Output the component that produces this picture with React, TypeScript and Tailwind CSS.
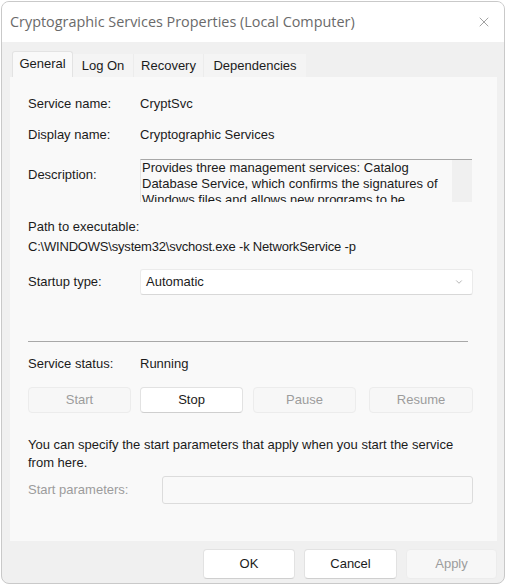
import { X, ChevronDown } from 'lucide-react'

const body = { fontFamily: '"Liberation Sans", Arial, sans-serif' }

function Btn({ label, disabled, w }: { label: string; disabled?: boolean; w: string }) {
  return (
    <div
      className={
        'flex items-center justify-center rounded-[4px] border text-[13px] ' +
        w +
        (disabled
          ? ' bg-[#f7f7f7] border-[#ececec] text-[#9c9c9c]'
          : ' bg-white border-[#e2e2e2] border-b-[#cfcfcf] text-[#1b1b1b]')
      }
    >
      {label}
    </div>
  )
}

export default function App() {
  return (
    <div className="w-[506px] h-[585px] bg-white p-[1px]" style={body}>
      <div className="flex flex-col h-[583px] rounded-lg border border-[#c9c9c9] bg-[#f0f0f0] overflow-hidden">
        {/* title bar */}
        <div className="flex items-center justify-between h-[40px] bg-white pl-[8px] pr-[12px] shrink-0">
          <span
            className="text-[14.4px] text-[#6a6a6a]"
            style={{ fontFamily: '"Open Sans", "Noto Sans", sans-serif' }}
          >
            Cryptographic Services Properties (Local Computer)
          </span>
          <X className="w-[16px] h-[16px] text-[#8a8a8a]" strokeWidth={1.2} />
        </div>

        {/* tabs */}
        <div className="flex items-end h-[35px] pl-[10px] text-[13px] text-[#1b1b1b] shrink-0">
          <div className="flex items-center justify-center w-[61px] h-[26px] pb-[2px] bg-[#f9f9f9] border border-b-0 border-[#e3e3e3] rounded-t-[3px]">
            General
          </div>
          <div className="flex items-center justify-center w-[60px] h-[23px] bg-[#f4f4f4]">Log On</div>
          <div className="flex items-center justify-center w-[70px] h-[23px] bg-[#f4f4f4] border-l border-[#ececec]">Recovery</div>
          <div className="flex items-center justify-center w-[103px] h-[23px] bg-[#f4f4f4] border-l border-[#ececec]">Dependencies</div>
        </div>

        {/* panel */}
        <div className="flex flex-col ml-[8px] w-[487px] h-[464px] bg-[#f9f9f9] pl-[18px] text-[13px] text-[#1b1b1b] shrink-0">
          <div className="flex items-center h-[20px] mt-[17px]">
            <span className="w-[112px]">Service name:</span>
            <span>CryptSvc</span>
          </div>
          <div className="flex items-center h-[20px] mt-[11px]">
            <span className="w-[112px]">Display name:</span>
            <span>Cryptographic Services</span>
          </div>
          <div className="flex mt-[14px] h-[43px]">
            <span className="w-[112px] pt-[6px]">Description:</span>
            <div className="flex w-[332px] h-[43px] border-t border-l border-[#a8a8a8] border-l-[#e4e4e4] overflow-hidden">
              <div className="flex-1 pl-[1px] leading-[16px] text-[#1b1b1b] overflow-hidden">
                Provides three management services: Catalog Database Service, which confirms the signatures of
                Windows files and allows new programs to be installed.
              </div>
              <div className="w-[20px] bg-[#f0f0f0]" />
            </div>
          </div>
          <div className="flex items-center h-[20px] mt-[15px]">Path to executable:</div>
          <div className="flex items-center h-[20px] tracking-[-0.2px]">C:\WINDOWS\system32\svchost.exe -k NetworkService -p</div>
          <div className="flex items-center mt-[12px]">
            <span className="w-[112px]">Startup type:</span>
            <div className="flex items-center justify-between w-[333px] h-[26px] bg-white border border-[#ebebeb] border-b-[#d8d8d8] rounded-[3px] pl-[5px] pr-[8px]">
              <span>Automatic</span>
              <ChevronDown className="w-[10px] h-[10px] text-[#8a8a8a]" strokeWidth={1.5} />
            </div>
          </div>
          <div className="w-[440px] h-[1px] bg-[#a8a8a8] mt-[46px]" />
          <div className="flex items-center h-[20px] mt-[12px]">
            <span className="w-[112px]">Service status:</span>
            <span>Running</span>
          </div>
          <div className="flex h-[26px] mt-[13px]">
            <Btn label="Start" disabled w="w-[103px]" />
            <div className="w-[9px]" />
            <Btn label="Stop" w="w-[103px]" />
            <div className="w-[10px]" />
            <Btn label="Pause" disabled w="w-[103px]" />
            <div className="w-[13px]" />
            <Btn label="Resume" disabled w="w-[104px]" />
          </div>
          <p className="mt-[23px] leading-[18px] w-[450px]">
            You can specify the start parameters that apply when you start the service from here.
          </p>
          <div className="flex items-center mt-[4px]">
            <span className="w-[134px] text-[#9c9c9c]">Start parameters:</span>
            <div className="w-[311px] h-[28px] border border-[#dcdcdc] rounded-[3px] bg-[#f9f9f9]" />
          </div>
        </div>

        {/* footer */}
        <div className="flex justify-end gap-[9px] pr-[7px] mt-[8px] h-[30px]">
          <Btn label="OK" w="w-[92px]" />
          <Btn label="Cancel" w="w-[93px]" />
          <Btn label="Apply" disabled w="w-[91px]" />
        </div>
      </div>
    </div>
  )
}
